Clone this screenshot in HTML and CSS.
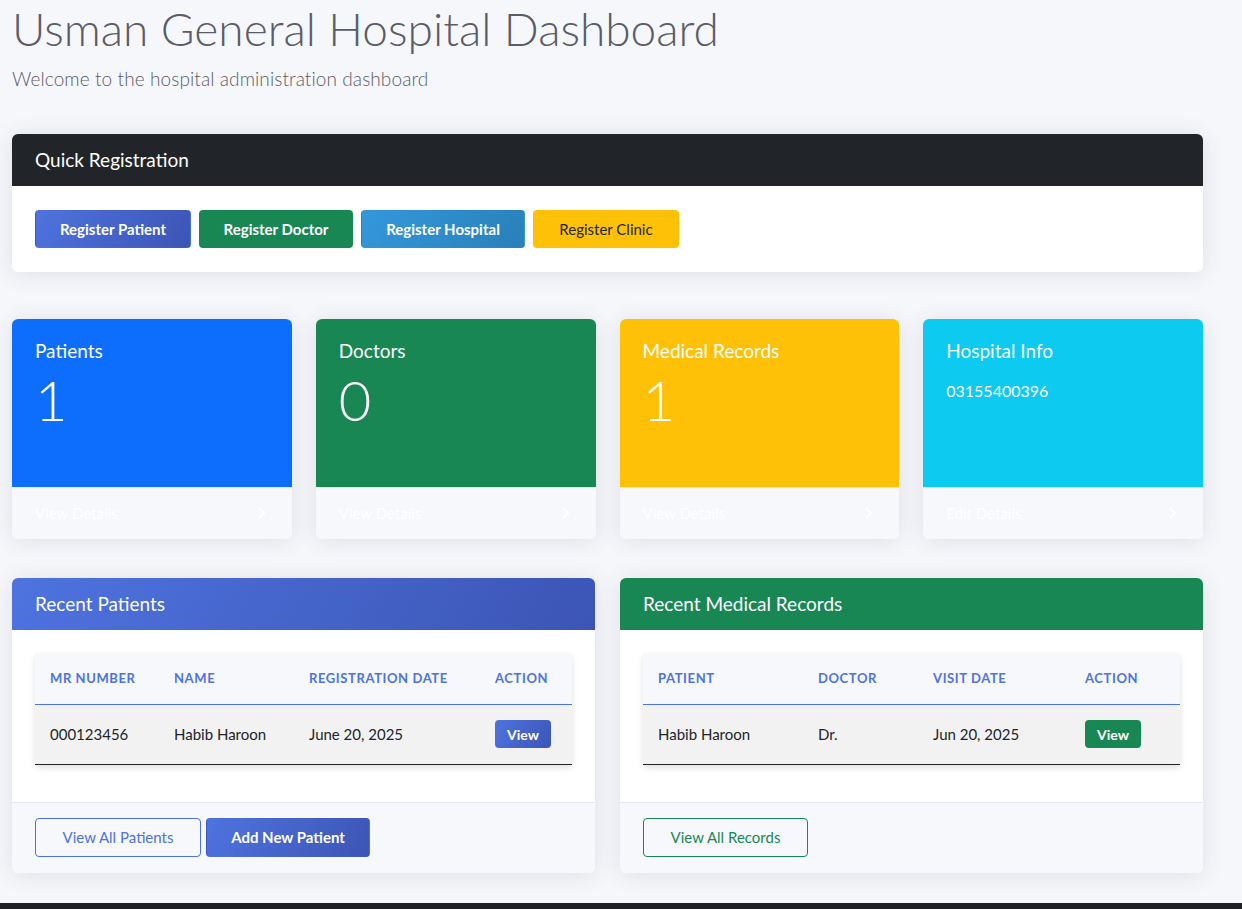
FILE: index.html
```html
<!DOCTYPE html>
<html lang="en">
<head>
<meta charset="utf-8">
<title>Usman General Hospital Dashboard</title>
<link rel="stylesheet" href="styles.css">
</head>
<body>
<div class="page">
  <header class="page-head">
    <h1 class="title">Usman General Hospital Dashboard</h1>
    <p class="lead">Welcome to the hospital administration dashboard</p>
  </header>

  <section class="card quick">
    <div class="card-header dark">Quick Registration</div>
    <div class="quick-body">
      <a class="btn btn-grad-blue">Register Patient</a>
      <a class="btn btn-green">Register Doctor</a>
      <a class="btn btn-grad-sky">Register Hospital</a>
      <a class="btn btn-yellow">Register Clinic</a>
    </div>
  </section>

  <section class="stats">
    <div class="stat card">
      <div class="stat-body bg-blue">
        <div class="stat-title">Patients</div>
        <div class="stat-num">1</div>
      </div>
      <div class="stat-foot"><span>View Details</span><svg class="chev" viewBox="0 0 8 12" width="8" height="12"><path d="M1.5 1.5 L6 6 L1.5 10.5" fill="none" stroke="#fff" stroke-width="2" stroke-linecap="round" stroke-linejoin="round"/></svg></div>
    </div>
    <div class="stat card">
      <div class="stat-body bg-green">
        <div class="stat-title">Doctors</div>
        <div class="stat-num">0</div>
      </div>
      <div class="stat-foot"><span>View Details</span><svg class="chev" viewBox="0 0 8 12" width="8" height="12"><path d="M1.5 1.5 L6 6 L1.5 10.5" fill="none" stroke="#fff" stroke-width="2" stroke-linecap="round" stroke-linejoin="round"/></svg></div>
    </div>
    <div class="stat card">
      <div class="stat-body bg-yellow">
        <div class="stat-title">Medical Records</div>
        <div class="stat-num">1</div>
      </div>
      <div class="stat-foot"><span>View Details</span><svg class="chev" viewBox="0 0 8 12" width="8" height="12"><path d="M1.5 1.5 L6 6 L1.5 10.5" fill="none" stroke="#fff" stroke-width="2" stroke-linecap="round" stroke-linejoin="round"/></svg></div>
    </div>
    <div class="stat card">
      <div class="stat-body bg-cyan">
        <div class="stat-title">Hospital Info</div>
        <div class="stat-phone">03155400396</div>
      </div>
      <div class="stat-foot"><span>Edit Details</span><svg class="chev" viewBox="0 0 8 12" width="8" height="12"><path d="M1.5 1.5 L6 6 L1.5 10.5" fill="none" stroke="#fff" stroke-width="2" stroke-linecap="round" stroke-linejoin="round"/></svg></div>
    </div>
  </section>

  <section class="lists">
    <div class="card list">
      <div class="card-header grad-blue">Recent Patients</div>
      <div class="list-body">
        <table class="tbl tbl-patients">
          <thead>
            <tr><th class="c1">MR Number</th><th class="c2">Name</th><th class="c3">Registration Date</th><th class="c4">Action</th></tr>
          </thead>
          <tbody>
            <tr><td>000123456</td><td>Habib Haroon</td><td>June 20, 2025</td><td><a class="btn-sm btn-grad-blue">View</a></td></tr>
          </tbody>
        </table>
      </div>
      <div class="list-foot">
        <a class="btn btn-outline-blue">View All Patients</a>
        <a class="btn btn-grad-blue">Add New Patient</a>
      </div>
    </div>

    <div class="card list">
      <div class="card-header green">Recent Medical Records</div>
      <div class="list-body">
        <table class="tbl tbl-records">
          <thead>
            <tr><th class="r1">Patient</th><th class="r2">Doctor</th><th class="r3">Visit Date</th><th class="r4">Action</th></tr>
          </thead>
          <tbody>
            <tr><td>Habib Haroon</td><td>Dr.</td><td>Jun 20, 2025</td><td><a class="btn-sm btn-green">View</a></td></tr>
          </tbody>
        </table>
      </div>
      <div class="list-foot">
        <a class="btn btn-outline-green">View All Records</a>
      </div>
    </div>
  </section>
</div>
<div class="bottom-bar"></div>
</body>
</html>
```
FILE: styles.css
```css
* { box-sizing: border-box; }
html, body { margin: 0; padding: 0; }
body {
  background: #f6f7fb;
  font-family: "Lato", "Noto Sans", sans-serif;
  color: #212529;
  min-height: 909px;
  position: relative;
}
.page {
  width: 1203px;
  padding: 0 0 0 12px;
}
.page-head { height: 134px; padding-top: 1px; }
.title {
  margin: 0;
  font-weight: 300;
  font-size: 46px;
  line-height: 56px;
  color: #5a5c69;
  letter-spacing: 0;
}
.lead {
  margin: 10px 0 0;
  font-size: 19px;
  font-weight: 300;
  color: #5a5c69;
  line-height: 24px;
  letter-spacing: 0.1px;
}
.card {
  background: #fff;
  border-radius: 6px;
  box-shadow: 0 2px 22px rgba(58, 59, 69, 0.12);
  overflow: hidden;
}
.card-header {
  height: 52px;
  padding: 0 23px 2px;
  display: flex;
  align-items: center;
  font-size: 19px;
  color: #fff;
}
.card-header.dark { background: #212529; }
.card-header.green { background: #198754; }
.card-header.grad-blue { background: linear-gradient(120deg, #4e73df 0%, #3c55b5 100%); }

.quick-body {
  padding: 24px 23px;
  display: flex;
  gap: 8px;
}
.btn {
  display: inline-flex;
  align-items: center;
  justify-content: center;
  height: 38px;
  padding: 0 0 1px;
  border-radius: 4px;
  font-size: 15px;
  font-weight: 700;
  color: #fff;
  text-decoration: none;
  border: 1px solid transparent;
}
.btn-grad-blue { background: linear-gradient(120deg, #4e73df 0%, #3c55b5 100%); color: #fff; }
.btn-grad-sky { background: linear-gradient(120deg, #3498db 0%, #2980b9 100%); color: #fff; }
.btn-green { background: #198754; color: #fff; }
.btn-yellow { background: #ffc107; color: #212529; font-weight: 400; }
.quick-body .btn-grad-blue { width: 156px; }
.quick-body .btn-green { width: 154px; }
.quick-body .btn-grad-sky { width: 164px; }
.quick-body .btn-yellow { width: 146px; }

.stats {
  margin-top: 47px;
  display: grid;
  grid-template-columns: repeat(4, 1fr);
  gap: 24px;
}
.stat { display: flex; flex-direction: column; height: 220px; }
.stat-body {
  height: 168px;
  padding: 20px 23px;
  color: #fff;
}
.bg-blue { background: #0d6efd; }
.bg-green { background: #198754; }
.bg-yellow { background: #ffc107; }
.bg-cyan { background: #0dcaf0; }
.stat-title { font-size: 19px; line-height: 24px; }
.stat-num { font-size: 56px; font-weight: 300; line-height: 68px; margin-top: 3px; }
.stat-phone { font-size: 16px; line-height: 20px; margin-top: 18px; }
.stat-foot {
  flex: 1;
  background: #f6f8fc;
  border-top: 1px solid #e3e6f0;
  padding: 0 23px 2px;
  display: flex;
  justify-content: space-between;
  align-items: center;
  color: #fff;
  font-size: 15px;
}
.chev { display: block; margin-right: 3px; }

.lists {
  margin-top: 39px;
  display: grid;
  grid-template-columns: 1fr 1fr;
  gap: 25px;
}
.list-body {
  padding: 23px 23px 37px;
  height: 172px;
}
.tbl {
  width: 100%;
  border-collapse: collapse;
  box-shadow: 0 3px 6px rgba(0, 0, 0, 0.12);
  border-radius: 4px;
  font-size: 15px;
}
.tbl th {
  background: #f6f8fc;
  height: 51px;
  text-align: left;
  padding: 0 15px;
  font-size: 13px;
  font-weight: 700;
  letter-spacing: 0.6px;
  text-transform: uppercase;
  color: #4e73df;
  border-bottom: 1px solid #4e73df;
}
.tbl td {
  background: #f2f2f2;
  height: 60px;
  padding: 0 15px;
  border-bottom: 1px solid #222;
  color: #212529;
}
.tbl-patients .c1 { width: 124px; }
.tbl-patients .c2 { width: 135px; }
.tbl-patients .c3 { width: 186px; }
.tbl-records .r1 { width: 160px; }
.tbl-records .r2 { width: 115px; }
.tbl-records .r3 { width: 152px; }
.btn-sm {
  display: inline-flex;
  align-items: center;
  justify-content: center;
  height: 28px;
  width: 56px;
  border-radius: 4px;
  font-size: 14px;
  font-weight: 700;
  color: #fff;
}
.list-foot {
  background: #f6f8fc;
  border-top: 1px solid #e3e6f0;
  padding: 15px 23px 16px;
  display: flex;
  gap: 5px;
}
.list-foot .btn { height: 39px; font-weight: 400; font-size: 15px; }
.btn-outline-blue { background: transparent; color: #4e73df; border-color: #4e73df; width: 166px; }
.btn-outline-green { background: transparent; color: #198754; border-color: #198754; width: 165px; }
.list-foot .btn-grad-blue { width: 164px; font-weight: 700; }

.bottom-bar {
  position: absolute;
  left: 0;
  right: 0;
  top: 903px;
  height: 6px;
  background: #1f2125;
}
```
